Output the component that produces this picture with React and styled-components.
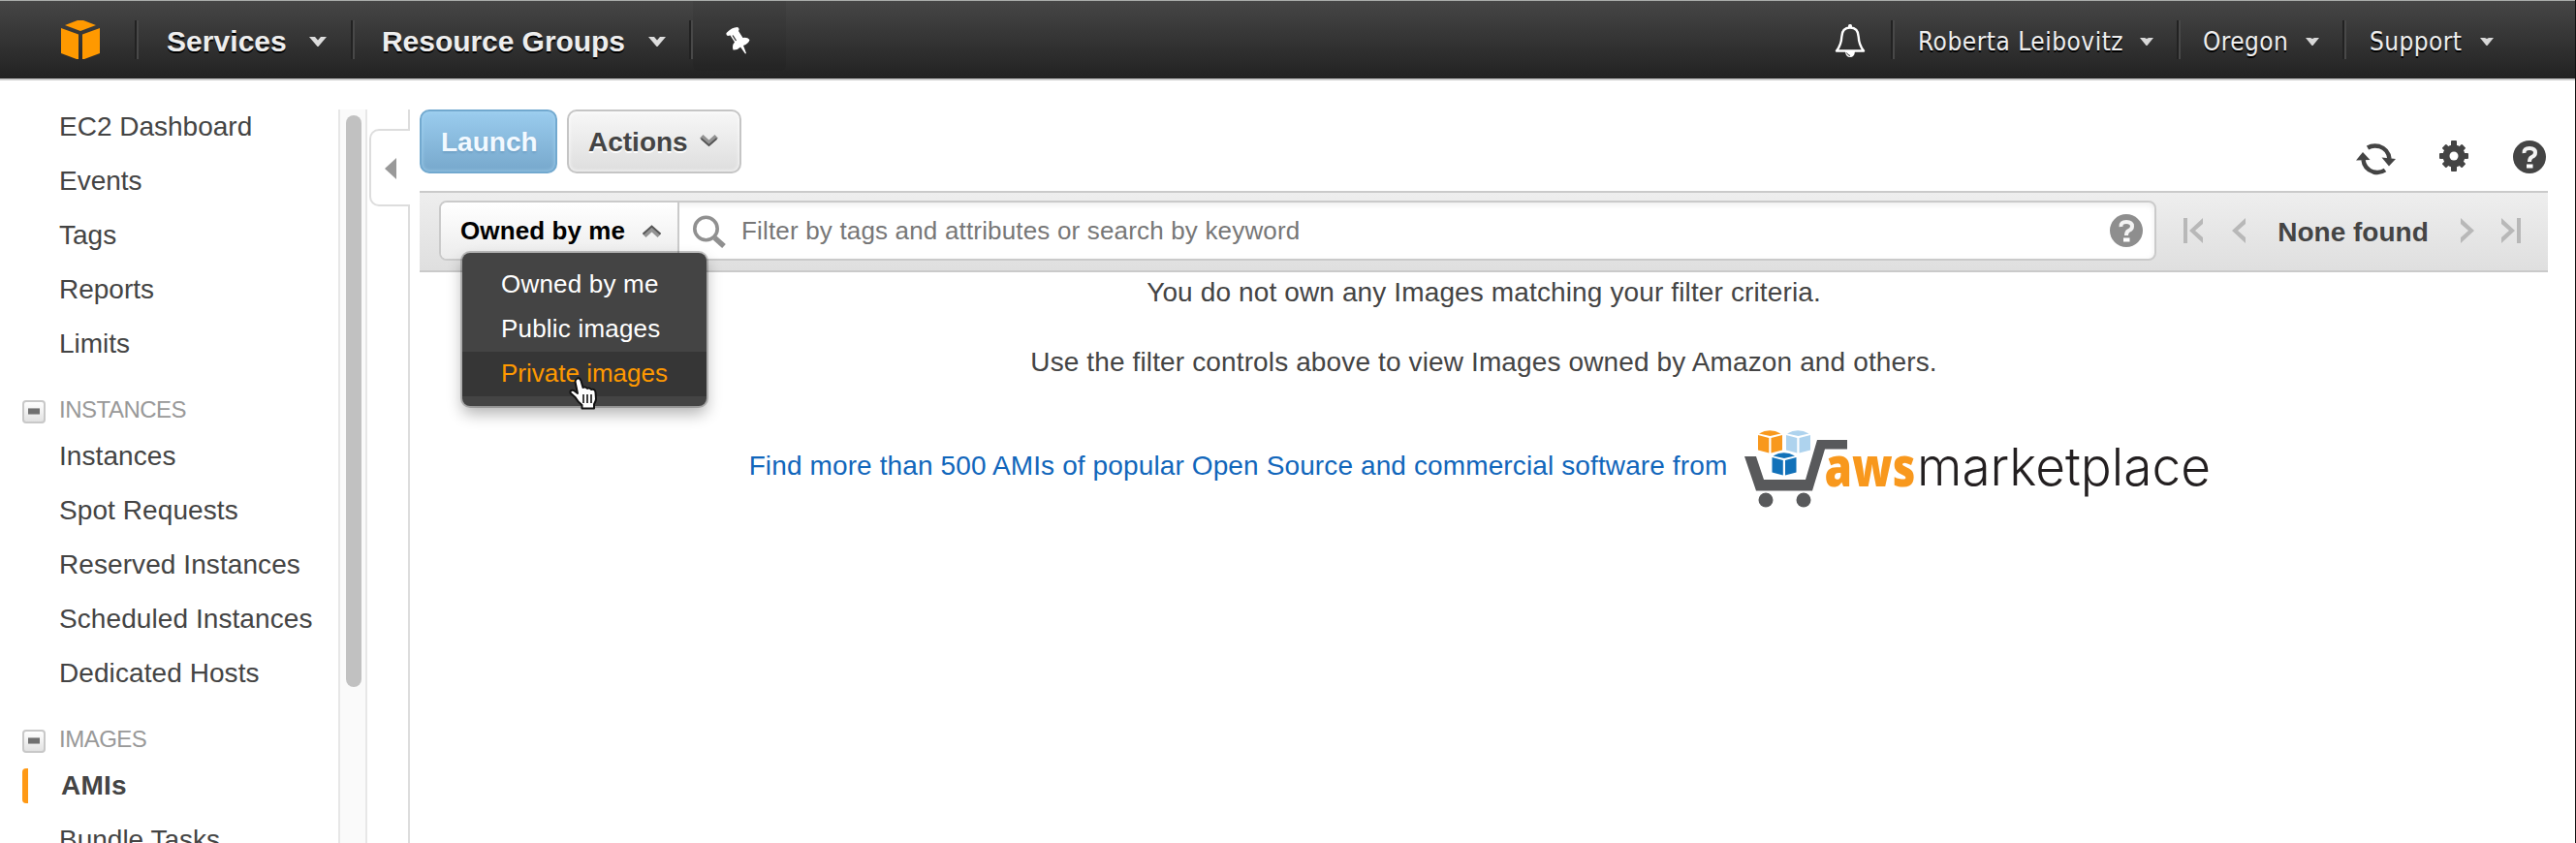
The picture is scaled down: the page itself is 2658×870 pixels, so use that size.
import React from "react";
import styled, { createGlobalStyle, css } from "styled-components";

const Global = createGlobalStyle`
  * { box-sizing: border-box; }
  html, body { margin: 0; padding: 0; background: #fff; }
  body { overflow: hidden; font-family: "Liberation Sans", Arial, sans-serif; color: #444; }
  svg { display: block; flex: none; overflow: visible; }
`;

const Page = styled.div`
  width: 2658px;
  height: 870px;
  display: flex;
  flex-direction: column;
  overflow: hidden;
  background: #fff;
  border-right: 1px solid #111;
`;

/* ---------- top navigation ---------- */

const TopBar = styled.header`
  flex: none;
  height: 83px;
  display: flex;
  justify-content: space-between;
  border-top: 1px solid #aaadab;
  border-bottom: 2px solid #cbcbcb;
  background: linear-gradient(#464646, #222);
`;

const NavGroup = styled.div`
  display: flex;
  align-items: stretch;
`;

const Divider = styled.span`
  align-self: center;
  width: 4px;
  height: 40px;
  background: linear-gradient(90deg, #222 50%, #484848 50%);
`;

const LogoLink = styled.a`
  width: 139px;
  padding-left: 63px;
  display: flex;
  align-items: center;
`;

const NavItem = styled.a`
  display: flex;
  align-items: center;
  justify-content: space-between;
  width: ${(p) => p.$w}px;
  padding: ${(p) => (p.$small ? 3 : 4)}px ${(p) => p.$pr}px 0 ${(p) => p.$pl}px;
  color: #eee;
  white-space: nowrap;
  text-shadow: 0 2px 0 #000;
  ${(p) =>
    p.$small
      ? css`
          font: 26px "DejaVu Sans Condensed", "DejaVu Sans", sans-serif;
          font-stretch: condensed;
        `
      : css`
          font: bold 30px "Liberation Sans", Arial, sans-serif;
        `}
  letter-spacing: ${(p) => p.$ls || 0}px;
`;

const PinButton = styled.a`
  width: 96px;
  height: 72px;
  padding: 26px 0 0 34px;
  border-radius: 0 0 6px 6px;
  background: rgba(0, 0, 0, 0.05);
`;

const BellButton = styled.a`
  width: 83px;
  padding: 24px 0 0 25px;
`;

const UserGroup = styled(NavGroup)`
  padding-right: 60px;
`;

/* ---------- side navigation ---------- */

const Body = styled.div`
  flex: 1;
  min-height: 0;
  display: flex;
`;

const SideNav = styled.nav`
  width: 349px;
  flex: none;
  padding-top: 20px;
  overflow: hidden;
`;

const SideLink = styled.a`
  display: flex;
  align-items: center;
  height: 56px;
  padding-left: ${(p) => (p.$active ? 0 : 38)}px;
  margin-left: 23px;
  font-size: 28px;
  font-weight: ${(p) => (p.$active ? "bold" : "normal")};
  letter-spacing: ${(p) => p.$ls || 0}px;
  color: #444;
  white-space: nowrap;
`;

const ActiveMark = styled.span`
  width: 6px;
  height: 36px;
  margin-right: 34px;
  border-radius: 4px 0 0 4px;
  background: #ff9914;
`;

const SideHeading = styled.div`
  display: flex;
  align-items: center;
  height: 60px;
  padding: 19px 0 0 23px;
  font-size: 24px;
  letter-spacing: ${(p) => p.$ls}px;
  color: #999;
`;

const CollapseBox = styled.span`
  display: flex;
  align-items: center;
  justify-content: center;
  width: 24px;
  height: 24px;
  margin: 4px 14px 0 0;
  border: 2px solid #c8c8c8;
  border-radius: 4px;
  background: linear-gradient(#fff, #e2e2e2);

  &::before {
    content: "";
    width: 12px;
    height: 5px;
    background: #707070;
    border: solid #a8a8a8;
    border-width: 1px 0;
  }
`;

const ScrollTrack = styled.div`
  flex: none;
  width: 30px;
  margin-top: 30px;
  padding: 6px;
  border: solid #e7e7e7;
  border-width: 0 2px;
  background: #fafafa;
`;

const ScrollThumb = styled.div`
  width: 16px;
  height: 590px;
  border-radius: 8px;
  background: #c1c1c1;
`;

const Gutter = styled.div`
  flex: none;
  width: 44px;
  margin-top: 30px;
  padding-left: 2px;
  display: flex;
  flex-direction: column;
`;

const GutterLine = styled.div`
  align-self: flex-end;
  width: 2px;
  flex: ${(p) => (p.$h ? "none" : 1)};
  height: ${(p) => (p.$h ? p.$h + "px" : "auto")};
  background: #ddd;
`;

const CollapseTab = styled.div`
  flex: none;
  height: 80px;
  padding: 28px 0 0 14px;
  border: 2px solid #ddd;
  border-right: 0;
  border-radius: 10px 0 0 10px;
`;

/* ---------- main pane ---------- */

const Main = styled.main`
  flex: 1;
  min-width: 0;
  padding: 30px 28px 0 10px;
  display: flex;
  flex-direction: column;
`;

const Toolbar = styled.div`
  display: flex;
  height: 66px;
  gap: 10px;
`;

const Button = styled.button`
  display: flex;
  align-items: center;
  justify-content: space-between;
  width: ${(p) => p.$w}px;
  height: 66px;
  padding: 2px 22px 0 20px;
  border-radius: 10px;
  font: bold 28px "Liberation Sans", Arial, sans-serif;
  ${(p) =>
    p.$primary
      ? css`
          border: 2px solid #72a9cf;
          background: linear-gradient(#9accee, #77a8cc);
          box-shadow: inset 0 0 4px #a4d2f0;
          color: #f2f9ff;
          text-shadow: 0 2px 2px rgba(80, 130, 170, 0.35);
        `
      : css`
          border: 2px solid #c5c5c5;
          background: linear-gradient(#f7f7f7, #dedede);
          box-shadow: inset 0 0 4px #fff;
          color: #444;
          text-shadow: 0 2px 0 #fff;
        `}
`;

const ToolIcons = styled.div`
  display: flex;
  align-items: flex-start;
  margin-left: auto;
  padding: 32px 2px 0 0;
`;

const IconSlot = styled.span`
  margin: ${(p) => p.$top || 0}px 0 ${(p) => p.$bottom || 0}px ${(p) => p.$left || 0}px;
`;

const FilterBar = styled.div`
  display: flex;
  flex: none;
  align-items: flex-start;
  height: 84px;
  margin-top: 18px;
  padding: 8px 28px 0 20px;
  border: solid #cacaca;
  border-width: 2px 0;
  background: linear-gradient(#eee, #dfdfdf);
`;

const FilterBox = styled.div`
  position: relative;
  display: flex;
  width: 1772px;
  height: 62px;
  border: 2px solid #cacaca;
  border-radius: 8px;
  background: #fff;
  box-shadow: inset 0 2px 6px rgba(0, 0, 0, 0.08);
`;

const OwnerSelect = styled.div`
  display: flex;
  align-items: center;
  justify-content: space-between;
  width: 246px;
  padding: 0 17px 0 20px;
  border-right: 2px solid #cacaca;
  border-radius: 6px 0 0 6px;
  background: linear-gradient(#fff, #ececec);
  font-weight: bold;
  font-size: 26px;
  letter-spacing: 0.1px;
  color: #000;
`;

const SearchField = styled.div`
  flex: 1;
  display: flex;
  align-items: center;
  padding: 0 12px 0 14px;
  font-size: 26px;
  color: #777;
`;

const SearchText = styled.span`
  flex: 1;
  padding-left: 14px;
  letter-spacing: 0.17px;
`;

const Menu = styled.ul`
  position: absolute;
  left: 22px;
  top: 52px;
  z-index: 2;
  width: 252px;
  margin: 0;
  padding: 10px 0;
  list-style: none;
  border-radius: 8px;
  background: #444;
  box-shadow: 0 0 0 2px rgba(0, 0, 0, 0.22), 0 8px 16px rgba(0, 0, 0, 0.3);
`;

const MenuItem = styled.li`
  height: 46px;
  line-height: 45px;
  padding-left: 40px;
  font-size: 26px;
  letter-spacing: ${(p) => p.$ls || 0}px;
  color: ${(p) => (p.$hover ? "#ff9900" : "#fff")};
  background: ${(p) => (p.$hover ? "#363636" : "transparent")};
`;

const Pointer = styled.svg`
  position: absolute;
  left: 109px;
  top: 127px;
`;

const Pager = styled.div`
  display: flex;
  align-items: center;
  height: 62px;
  margin-left: 28px;
  font-weight: bold;
  font-size: 28px;
  color: #444;
`;

const PagerText = styled.span`
  width: 188px;
  margin: 3px 17px 0;
  text-align: center;
`;

const Empty = styled.section`
  display: flex;
  flex-direction: column;
  align-items: center;
  font-size: 28px;
  white-space: nowrap;
`;

const Message = styled.p`
  height: 72px;
  line-height: 41px;
  margin: 0;
  letter-spacing: 0.13px;
`;

const MarketLink = styled.a`
  display: flex;
  align-items: center;
  height: 112px;
  margin-right: 7px;
  color: #1166bb;
  letter-spacing: 0.12px;
`;

/* ---------- icons ---------- */

const CubeLogo = () => (
  <svg width="40" height="40" viewBox="0 0 40 40" fill="#ff9900">
    <path d="M17 0H23L36 5 20 11 4 5z" />
    <path d="M0 8 18 14.500V40H16L0 34z" />
    <path d="M40 8 22 14.500V40H24L40 34z" />
  </svg>
);

const NavCaret = () => (
  <svg width="18" height="10" viewBox="0 0 18 10">
    <path d="M0 0H6L9 3.500 12 0H18L9.500 10H8.500z" fill="#ddd" />
  </svg>
);

const SmallCaret = () => (
  <svg width="14" height="8" viewBox="0 0 14 8">
    <path d="M0 0H5L7 1 9 0H14L7.500 8H6.500z" fill="#d8d8d8" />
  </svg>
);

const PinIcon = () => (
  <svg width="26" height="30" viewBox="0 0 26 30">
    <path
      d="M0.500 7Q0 9.500 2 10L4.500 9.500 9 16.500Q6 19.500 7.500 24.500Q12 25 15 21.500L20 28.500 21 28 18 20Q23.500 18 24.500 14Q22 11 17.500 12L13 5Q14.500 2.500 12 1Q6 1 0.500 7z"
      fill="#fff"
    />
    <path d="M7 9.500 10.500 15" stroke="#333" strokeWidth="1.300" />
  </svg>
);

const BellIcon = () => (
  <svg width="32" height="35" viewBox="0 0 32 35">
    <path
      d="M16 3.500C10 3.500 7.500 7.500 7.300 13C7 20 5.500 23 2 27.500H30C26.500 23 25 20 24.700 13C24.500 7.500 22 3.500 16 3.500z"
      fill="none"
      stroke="#fff"
      strokeWidth="2.400"
      strokeLinejoin="round"
    />
    <rect x="14" y="0" width="4" height="4" rx="1.500" fill="#fff" />
    <path d="M11 28H21Q20.500 34 16 34Q11.500 34 11 28z" fill="#fff" />
    <path d="M12.500 29.500Q13.500 32 16 32.500" fill="none" stroke="#333" strokeWidth="1" />
  </svg>
);

const Chevron = ({ up }) => (
  <svg width="19" height="12" viewBox="0 0 19 12">
    <g transform={up ? "translate(0 12) scale(1 -1)" : undefined}>
      <path d="M0 3.500 3.500 0 9.500 5.500 15.500 0 19 3.500 9.500 12z" fill="#939393" />
      <path
        d={up ? "M0.500 3.500 9.500 11.500 18.500 3.500" : "M1.500 4 9.500 11 17.500 4"}
        fill="none"
        stroke="#555"
        strokeWidth="1.800"
      />
    </g>
  </svg>
);

const SearchIcon = () => (
  <svg width="36" height="36" viewBox="0 0 36 36" fill="none" stroke="#909090">
    <circle cx="13.500" cy="16" r="11.700" strokeWidth="3.600" />
    <path d="M22.500 25.500 32 34" strokeWidth="5.500" />
  </svg>
);

const HelpIcon = ({ color }) => (
  <svg width="34" height="34" viewBox="0 0 34 34">
    <circle cx="17" cy="17" r="17" fill={color} />
    <path
      d="M11.500 13Q11 8 17 8Q23 8 23 12.500Q23 15.500 19.500 17Q17 18.300 17 22"
      fill="none"
      stroke="#f4f4f4"
      strokeWidth="4"
    />
    <rect x="14" y="24.500" width="6.500" height="4" fill="#fff" />
  </svg>
);

const RefreshIcon = () => (
  <svg width="42" height="33" viewBox="0 0 42 33">
    <g fill="none" stroke="#444" strokeWidth="4.400">
      <path d="M12 4.500Q17 1.500 24 3Q33.500 6 34.500 16" />
      <path d="M30 27.500Q25 31 18 29.500Q8.500 26.500 7.500 17" />
    </g>
    <path d="M26.500 14.500 41 16 34 23.500z" fill="#444" />
    <path d="M0 17.500 7 9 14.500 17z" fill="#444" />
  </svg>
);

const GearIcon = () => (
  <svg width="30" height="32" viewBox="-15 -16 30 32">
    <g fill="#444">
      <circle r="11.500" />
      {[0, 45, 90, 135].map((a) => (
        <rect
          key={a}
          x="-3"
          y={a % 90 ? -14.5 : a ? -15 : -16}
          width="6"
          height={a % 90 ? 29 : a ? 30 : 32}
          rx="1"
          transform={`rotate(${a})`}
        />
      ))}
    </g>
    <circle r="4.500" fill="#fff" />
  </svg>
);

const PageArrow = ({ bar, flip }) => (
  <svg width={bar ? 20 : 14} height="26" viewBox={bar ? "0 0 20 26" : "6 0 14 26"}>
    <g transform={flip ? (bar ? "translate(20 0) scale(-1 1)" : "translate(26 0) scale(-1 1)") : undefined} fill="#b8b8b8">
      {bar && <rect width="4" height="26" />}
      <path d="M20 0V6L12 13 20 20V26L6 13z" />
    </g>
  </svg>
);

const Hand = () => (
  <Pointer width="34" height="36" viewBox="0 0 34 36">
    <path
      d="M9 3Q12 1 13.500 5L15.500 12Q18 10.500 20 13Q22 11.500 24 14Q28 13 28.500 17L29 24Q28.500 27 27 29V33.500H14.500V30Q10 26.500 7.500 22L2.500 17.500Q2 14 6 15L10 18L7.500 6Q7.500 4 9 3z"
      fill="#fff"
      stroke="#111"
      strokeWidth="2"
      strokeLinejoin="round"
    />
    <path d="M16 19V28M20 19V28M24 19V28" stroke="#111" strokeWidth="1.600" />
  </Pointer>
);

const MiniCube = ({ x, y, fill }) => (
  <g transform={`translate(${x} ${y})`} fill={fill}>
    <path d="M1 3.500Q12-3 23.500 3.500L12.500 6z" />
    <path d="M0 5 11.300 8V23.500L0 20.500z" />
    <path d="M25 5 13.500 8V23.500L25 20.500z" />
  </g>
);

const MarketplaceLogo = () => (
  <svg width="482" height="82" viewBox="0 0 482 82">
    <MiniCube x="14" y="1" fill="#f8981d" />
    <MiniCube x="43" y="1" fill="#aed3ee" />
    <MiniCube x="28.500" y="24" fill="#1171b9" />
    <path d="M0 28H12L20 52H63L75 11H106V20.500H83L70 63.500H12z" fill="#58595b" />
    <circle cx="22" cy="73" r="7.500" fill="#58595b" />
    <circle cx="61" cy="73" r="7.500" fill="#58595b" />
    <text
      x="82.500"
      y="59"
      fontFamily="Open Sans"
      fontWeight="800"
      fontSize="56"
      fill="#f8981d"
      letterSpacing="0"
      textLength="94"
      lengthAdjust="spacingAndGlyphs"
    >
      aws
    </text>
    <text
      x="178"
      y="58"
      fontFamily="Inter"
      fontWeight="300"
      fontSize="54"
      fill="#231f20"
      letterSpacing="0"
      textLength="303"
      lengthAdjust="spacingAndGlyphs"
    >
      marketplace
    </text>
  </svg>
);

/* ---------- page ---------- */

const topLinks = ["EC2 Dashboard", "Events", "Tags", "Reports", "Limits"];
const instanceLinks = ["Instances", "Spot Requests", "Reserved Instances", "Scheduled Instances", "Dedicated Hosts"];

export default function App() {
  return (
    <>
      <Global />
      <Page>
        <TopBar>
          <NavGroup>
            <LogoLink>
              <CubeLogo />
            </LogoLink>
            <Divider />
            <NavItem $w={219} $pl={29} $pr={25} $ls={0.05}>
              Services
              <NavCaret />
            </NavItem>
            <Divider />
            <NavItem $w={345} $pl={28} $pr={24} $ls={-0.05}>
              Resource Groups
              <NavCaret />
            </NavItem>
            <Divider />
            <PinButton>
              <PinIcon />
            </PinButton>
          </NavGroup>
          <UserGroup>
            <BellButton>
              <BellIcon />
            </BellButton>
            <Divider />
            <NavItem $small $w={291} $pl={24} $pr={24} $ls={0.5}>
              Roberta Leibovitz
              <SmallCaret />
            </NavItem>
            <Divider />
            <NavItem $small $w={167} $pl={23} $pr={24} $ls={0.4}>
              Oregon
              <SmallCaret />
            </NavItem>
            <Divider />
            <NavItem $small $w={176} $pl={24} $pr={24} $ls={0.4}>
              Support
              <SmallCaret />
            </NavItem>
          </UserGroup>
        </TopBar>

        <Body>
          <SideNav>
            {topLinks.map((t) => (
              <SideLink key={t}>{t}</SideLink>
            ))}
            <SideHeading $ls={-0.5}>
              <CollapseBox />
              INSTANCES
            </SideHeading>
            {instanceLinks.map((t) => (
              <SideLink key={t} $ls={0.08}>
                {t}
              </SideLink>
            ))}
            <SideHeading $ls={-0.5}>
              <CollapseBox />
              IMAGES
            </SideHeading>
            <SideLink $active $ls={0.2}>
              <ActiveMark />
              AMIs
            </SideLink>
            <SideLink>Bundle Tasks</SideLink>
          </SideNav>
          <ScrollTrack>
            <ScrollThumb />
          </ScrollTrack>
          <Gutter>
            <GutterLine $h={20} />
            <CollapseTab>
              <svg width="12" height="22" viewBox="0 0 12 22">
                <path d="M12 0V22L0 11z" fill="#999" />
              </svg>
            </CollapseTab>
            <GutterLine />
          </Gutter>

          <Main>
            <Toolbar>
              <Button $primary $w={142}>
                Launch
              </Button>
              <Button $w={180}>
                Actions
                <IconSlot $bottom={4}>
                  <Chevron />
                </IconSlot>
              </Button>
              <ToolIcons>
                <IconSlot $top={3}>
                  <RefreshIcon />
                </IconSlot>
                <IconSlot $left={44}>
                  <GearIcon />
                </IconSlot>
                <IconSlot $left={46}>
                  <HelpIcon color="#444" />
                </IconSlot>
              </ToolIcons>
            </Toolbar>

            <FilterBar>
              <FilterBox>
                <OwnerSelect>
                  Owned by me
                  <IconSlot $top={2}>
                    <Chevron up />
                  </IconSlot>
                </OwnerSelect>
                <SearchField>
                  <SearchIcon />
                  <SearchText>Filter by tags and attributes or search by keyword</SearchText>
                  <HelpIcon color="#8e8e8e" />
                </SearchField>
                <Menu>
                  <MenuItem $ls={0.2}>Owned by me</MenuItem>
                  <MenuItem $ls={0.2}>Public images</MenuItem>
                  <MenuItem $hover>Private images</MenuItem>
                  <Hand />
                </Menu>
              </FilterBox>
              <Pager>
                <PageArrow bar />
                <IconSlot $left={30}>
                  <PageArrow />
                </IconSlot>
                <PagerText>None found</PagerText>
                <PageArrow flip />
                <IconSlot $left={28}>
                  <PageArrow bar flip />
                </IconSlot>
              </Pager>
            </FilterBar>

            <Empty>
              <Message>You do not own any Images matching your filter criteria.</Message>
              <Message>Use the filter controls above to view Images owned by Amazon and others.</Message>
              <MarketLink>
                Find more than 500 AMIs of popular Open Source and commercial software from
                <IconSlot $left={18} $top={6}>
                  <MarketplaceLogo />
                </IconSlot>
              </MarketLink>
            </Empty>
          </Main>
        </Body>
      </Page>
    </>
  );
}
